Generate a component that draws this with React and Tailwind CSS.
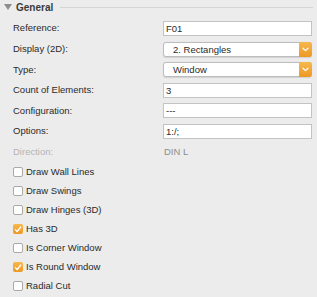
import React from 'react'

const fields = [
  { label: 'Reference:', kind: 'input', value: 'F01' },
  { label: 'Display (2D):', kind: 'select', value: '2. Rectangles' },
  { label: 'Type:', kind: 'select', value: 'Window' },
  { label: 'Count of Elements:', kind: 'input', value: '3' },
  { label: 'Configuration:', kind: 'input', value: '---' },
  { label: 'Options:', kind: 'input', value: '1:/;' },
]

const checks = [
  { label: 'Draw Wall Lines', on: false },
  { label: 'Draw Swings', on: false },
  { label: 'Draw Hinges (3D)', on: false },
  { label: 'Has 3D', on: true },
  { label: 'Is Corner Window', on: false },
  { label: 'Is Round Window', on: true },
  { label: 'Radial Cut', on: false },
]

function Select({ value }) {
  return (
    <div className="flex h-[15px] w-[149px] rounded-[3px] border border-[#bdbdbd] bg-white shadow-[0_0.5px_1px_rgba(0,0,0,0.12)]">
      <div className="flex-1 pl-[9px] leading-[13px]">{value}</div>
      <div className="-my-px -mr-px flex w-[13px] items-center justify-center rounded-r-[3px] bg-gradient-to-b from-[#f6b84c] to-[#ee9822]">
        <svg width="7" height="5" viewBox="0 0 7 5">
          <path d="M1 1.2 L3.5 3.6 L6 1.2" fill="none" stroke="white" strokeWidth="1.3" strokeLinecap="round" strokeLinejoin="round" />
        </svg>
      </div>
    </div>
  )
}

function Input({ value }) {
  return (
    <div className="h-[15px] w-[149px] border border-[#c3c3c3] bg-white pl-[2px] leading-[13px]">
      {value}
    </div>
  )
}

function Check({ on }) {
  if (on) {
    return (
      <div className="flex h-[10px] w-[10px] items-center justify-center rounded-[2px] bg-gradient-to-b from-[#f6b84c] to-[#ee9822]">
        <svg width="8" height="7" viewBox="0 0 8 7">
          <path d="M1.3 3.6 L3.1 5.5 L6.8 1" fill="none" stroke="white" strokeWidth="1.3" strokeLinecap="round" strokeLinejoin="round" />
        </svg>
      </div>
    )
  }
  return <div className="h-[10px] w-[10px] rounded-[2px] border border-[#a9a9a9] bg-white" />
}

export default function App() {
  return (
    <div className="h-[297px] w-[317px] overflow-hidden bg-[#ececec] font-['Liberation_Sans',Arial,sans-serif] text-[9.5px] text-[#2a2a2a]">
      {/* section header */}
      <div className="flex h-[14px] items-center pl-[4px] pr-[4px]">
        <svg width="8" height="6" viewBox="0 0 8 6">
          <path d="M0 0 L8 0 L4 6 Z" fill="#8d8d8d" />
        </svg>
        <span className="ml-[4px] text-[10px] font-bold text-[#3a3a3a]">General</span>
        <div className="ml-[7px] h-px flex-1 bg-[#d5d5d5]" />
      </div>

      <div className="mt-[7px] flex flex-col gap-[5.6px] pl-[13px]">
        {fields.map((f) => (
          <div key={f.label} className="flex h-[15px] items-center">
            <div className="w-[150px]">{f.label}</div>
            {f.kind === 'select' ? <Select value={f.value} /> : <Input value={f.value} />}
          </div>
        ))}
        <div className="flex h-[15px] items-center">
          <div className="w-[151px] text-[#b4b4b4]">Direction:</div>
          <div className="text-[#8e8e8e]">DIN L</div>
        </div>
      </div>

      <div className="mt-[3px] flex flex-col pl-[13px]">
        {checks.map((c) => (
          <div key={c.label} className="flex h-[19px] items-center gap-[3px]">
            <Check on={c.on} />
            <span>{c.label}</span>
          </div>
        ))}
      </div>
    </div>
  )
}
